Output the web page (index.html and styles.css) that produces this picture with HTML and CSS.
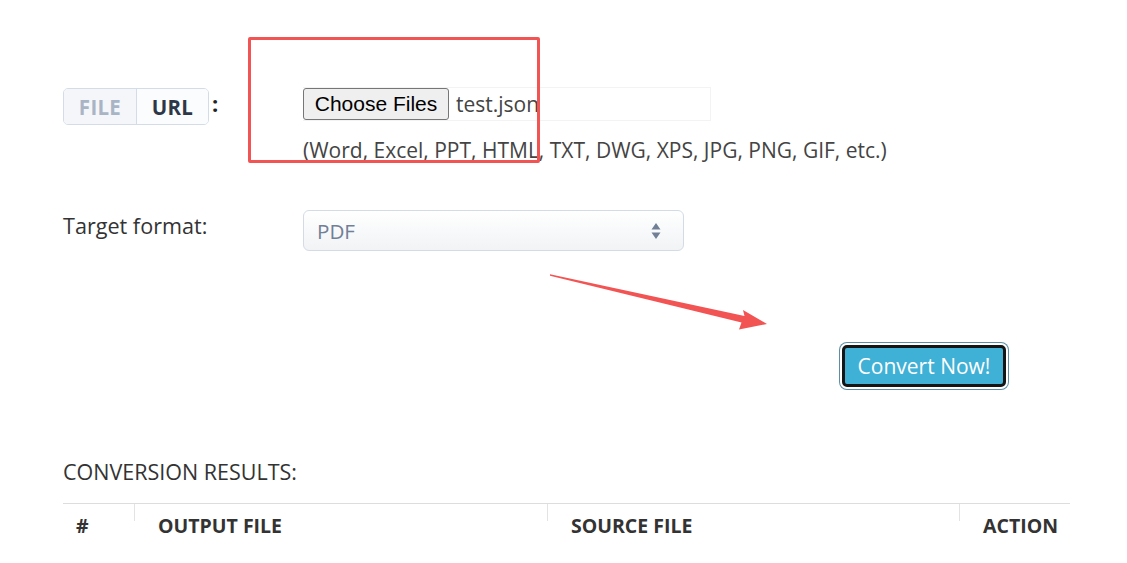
FILE: index.html
```
<!DOCTYPE html>
<html lang="en">
<head>
<meta charset="utf-8">
<title>Convert files</title>
<link rel="stylesheet" href="styles.css">
</head>
<body>
<main class="page">
  <section class="form">
    <div class="row row-file">
      <div class="label-col">
        <div class="toggle">
          <span class="seg seg-off">FILE</span>
          <span class="seg seg-on">URL</span>
        </div>
        <span class="colon">:</span>
      </div>
      <div class="field-col">
        <div class="file-input">
          <span class="file-btn">Choose Files</span>
          <span class="file-name">test.json</span>
        </div>
        <p class="hint">(Word, Excel, PPT, HTML, TXT, DWG, XPS, JPG, PNG, GIF, etc.)</p>
      </div>
    </div>
    <div class="row row-target">
      <div class="label-col"><span class="label">Target format:</span></div>
      <div class="field-col">
        <div class="select">
          <span class="select-value">PDF</span>
          <svg class="select-arrows" width="10" height="18" viewBox="0 0 10 18"><path d="M5 1 L9.5 7.5 L0.5 7.5 Z M5 17 L9.5 10.5 L0.5 10.5 Z" fill="#718096"/></svg>
        </div>
      </div>
    </div>
    <div class="actions">
      <button class="convert" type="button">Convert Now!</button>
    </div>
  </section>
  <h3 class="results-title">CONVERSION RESULTS:</h3>
  <table class="results">
    <thead>
      <tr>
        <th class="c-num">#</th>
        <th class="c-out">OUTPUT FILE</th>
        <th class="c-src">SOURCE FILE</th>
        <th class="c-act">ACTION</th>
      </tr>
    </thead>
  </table>
</main>
<div class="annot-box"></div>
<svg class="annot-arrow" width="1127" height="563" viewBox="0 0 1127 563">
  <polygon points="550,274.3 744.5,316 743,310 767,324 739,329.5 741.5,322.5 550,275.7" fill="#f25454"/>
</svg>
</body>
</html>
```
FILE: styles.css
```
* { box-sizing: border-box; }
html, body { margin: 0; padding: 0; background: #fff; }
body {
  font-family: "Open Sans", "Noto Sans", sans-serif;
  color: #333;
  width: 1127px;
  height: 563px;
  overflow: hidden;
  position: relative;
}
.page {
  padding: 87px 57px 0 63px;
}
.row {
  display: flex;
  align-items: flex-start;
}
.label-col {
  width: 240px;
  flex: none;
  display: flex;
  align-items: center;
}
.field-col { flex: 1; }

.toggle {
  display: flex;
  height: 37px;
  margin-top: 1px;
  border: 1px solid #d4dde7;
  border-radius: 5px;
  overflow: hidden;
}
.seg {
  display: flex;
  align-items: center;
  justify-content: center;
  font-weight: 700;
  font-size: 20.5px;
  letter-spacing: 0.3px;
}
.seg-off {
  width: 73px;
  background: #f4f6f9;
  color: #a9b5c5;
  border-right: 1px solid #d4dde7;
}
.seg-on {
  width: 71px;
  background: #fbfcfd;
  color: #2d3748;
}
.colon {
  font-weight: 700;
  font-size: 22px;
  color: #222;
  margin-left: 3px;
  margin-top: -6px;
}

.file-input {
  display: flex;
  align-items: center;
  width: 408px;
  height: 34px;
  border: 1px solid #f3f3f3;
  border-left: none;
}
.file-btn {
  display: flex;
  align-items: center;
  justify-content: center;
  width: 146px;
  height: 32px;
  background: #efefef;
  border: 1px solid #767676;
  border-radius: 3px;
  font-family: "Liberation Sans", Arial, sans-serif;
  font-size: 21px;
  color: #000;
}
.file-name {
  margin-left: 7px;
  font-size: 21px;
  color: #444;
}
.hint {
  margin: 15px 0 0;
  font-size: 21px;
  line-height: 28px;
  color: #444;
}

.row-target { margin-top: 46px; }
.row-target .label-col { height: 30px; }
.label {
  font-size: 21.6px;
  color: #333;
}
.select {
  width: 381px;
  height: 41px;
  border: 1px solid #d3dce6;
  border-radius: 6px;
  background: linear-gradient(#ffffff, #f1f3f5);
  display: flex;
  align-items: center;
  justify-content: space-between;
  padding: 0 22px 0 13px;
}
.select-value {
  font-size: 20.6px;
  color: #718096;
}
.select-arrows { display: block; }

.actions {
  display: flex;
  justify-content: flex-end;
  padding-right: 64px;
  margin-top: 94px;
}
.convert {
  width: 164px;
  height: 42px;
  background: #3fb0d6;
  border: 3px solid #151515;
  border-radius: 5px;
  box-shadow: 0 0 0 2px #fff, 0 0 0 3px #5b8fa6;
  color: #fff;
  font-family: "Open Sans", sans-serif;
  font-size: 21px;
  padding: 0;
}

.results-title {
  margin: 72px 0 0;
  font-size: 21.5px;
  font-weight: 400;
  line-height: 26px;
  color: #333;
}
.results {
  width: 1007px;
  margin-top: 18px;
  border-collapse: collapse;
  border-top: 1px solid #dddddd;
}
.results th {
  position: relative;
  text-align: left;
  font-size: 19.5px;
  font-weight: 700;
  color: #333;
  padding: 8px 0 0 24px;
  line-height: 28px;
}
.results th + th::before {
  content: "";
  position: absolute;
  left: 0;
  top: 0;
  width: 1px;
  height: 17px;
  background: #e3e3e3;
}
.results .c-num { width: 71px; padding-left: 13px; }
.results .c-out { width: 413px; }
.results .c-src { width: 412px; }
.results .c-act { width: 111px; }

.annot-box {
  position: absolute;
  left: 248px;
  top: 37px;
  width: 292px;
  height: 126px;
  border: 3px solid #f25454;
  border-radius: 2px;
}
.annot-arrow {
  position: absolute;
  left: 0;
  top: 0;
  pointer-events: none;
}
```
